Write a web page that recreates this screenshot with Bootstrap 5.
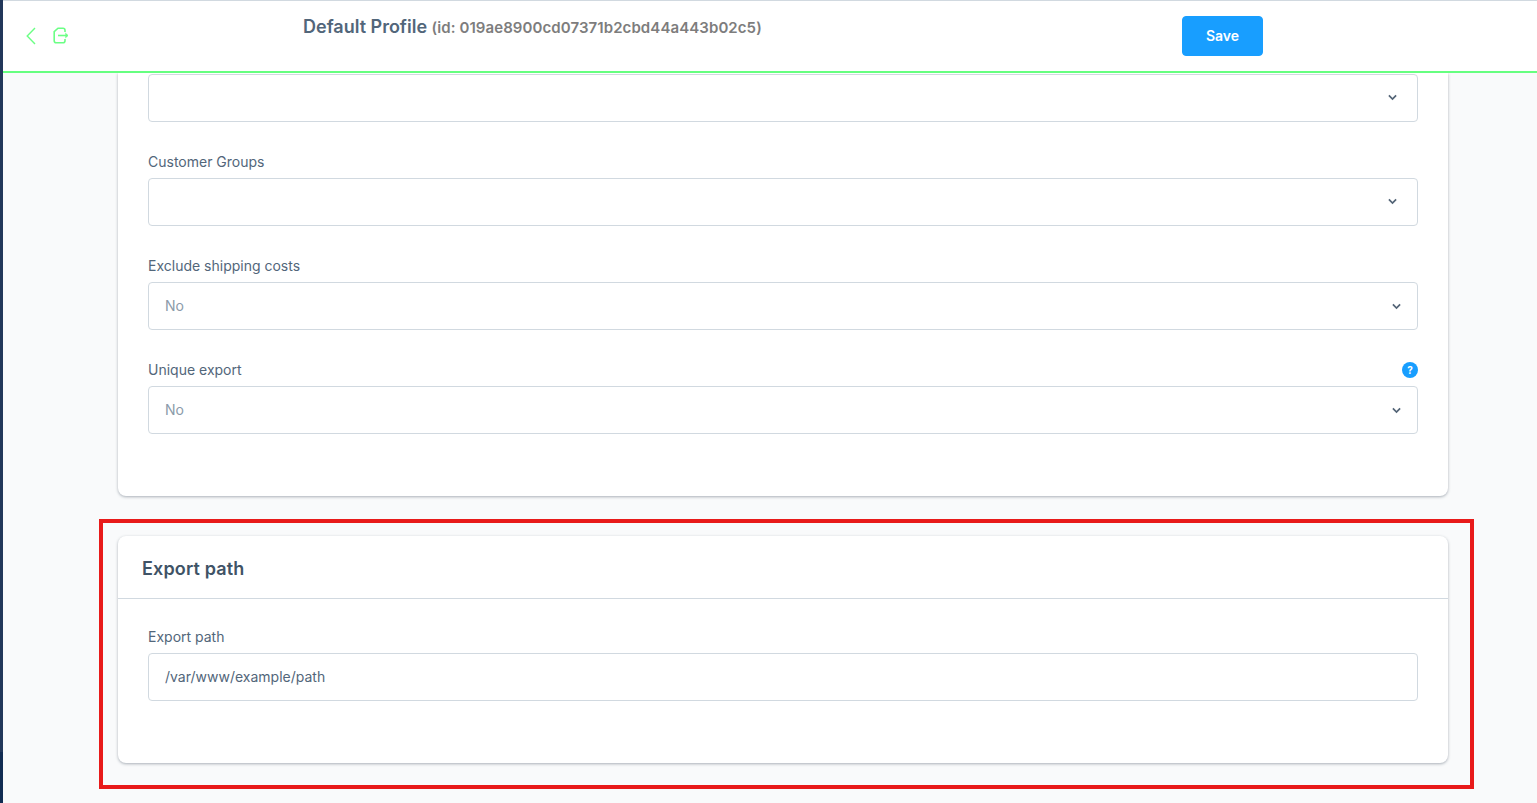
<!DOCTYPE html>
<html lang="en">
<head>
<meta charset="utf-8">
<title>Default Profile</title>
<link href="https://cdn.jsdelivr.net/npm/bootstrap@5.3.0/dist/css/bootstrap.min.css" rel="stylesheet">
<style>
html,body{height:100%;}
body{font-family:Inter,"Liberation Sans",sans-serif;font-size:14px;color:#52667a;background:#f9fafb;overflow:hidden;}
.app-shell{height:803px;overflow:hidden;}
.side-strip{width:3px;flex:none;background:linear-gradient(#22375a 0 752px,#112c52 752px);}
.work-area{min-width:0;position:relative;}
.top-bar{height:71px;flex:none;background:#fff;border-top:1px solid #d1d9e0;}
.top-rule{height:2px;flex:none;background:#66ff80;}
.top-icons{width:300px;padding-left:23px;padding-top:26px;gap:17px;}
.top-title{width:879px;padding-top:14px;font-size:18px;font-weight:600;line-height:24px;color:#52667a;white-space:nowrap;}
.top-title span{font-size:15px;letter-spacing:.085px;color:#7d7d7d;}
.save-btn{margin-top:15px;width:81px;height:40px;padding:0 0 1px;background:#189eff;border:1px solid #189eff;border-radius:4px;color:#fff;font-size:14px;font-weight:600;}
.save-btn:hover{background:#189eff;color:#fff;border-color:#189eff;}
.page-body{padding:0 89px 0 115px;}
.panel{border:0;border-radius:8px;background:#fff;box-shadow:0 1px 3px rgba(70,85,100,.45);}
.panel-first{border-radius:0 0 8px 8px;padding:1px 30px 62px;clip-path:inset(0 -6px -6px -6px);}
.panel-second{margin-top:40px;height:227px;}
.panel-head{height:63px;padding:0 24px;border-bottom:1px solid #d1d9e0;font-size:18px;font-weight:600;letter-spacing:.15px;color:#3f5366;line-height:66px;}
.panel-main{padding:30px 30px 0;}
.field-row{margin-top:32px;}
.field-row.first-row{margin-top:0;}
.field-label{height:16px;margin-bottom:8px;line-height:16px;font-size:14px;color:#52667a;}
.field-box{height:48px;border:1px solid #d1d9e0;border-radius:4px;background-color:#fff;padding:0 16px 2px;font-size:14px;color:#52667a;box-shadow:none;}
.form-select.field-box{--bs-form-select-bg-img:url("data:image/svg+xml,%3csvg xmlns='http://www.w3.org/2000/svg' viewBox='0 0 10 7'%3e%3cpath fill='none' stroke='%23536476' stroke-width='1.9' d='M1 1.2l4 4 4-4'/%3e%3c/svg%3e");background-size:9px 7px;background-position:right 20px top 19px;}
.form-select.field-box.muted-val{color:#8c9baa;padding-bottom:1px;background-position:right 16px center;}
.help-dot{width:16px;height:16px;border-radius:50%;background:#189eff;color:#fff;font-size:10px;font-weight:700;line-height:16px;text-align:center;}
.red-frame{position:absolute;left:96px;top:519px;width:1375px;height:270px;border:4px solid #e81a1a;pointer-events:none;}
</style>
</head>
<body>
<div class="app-shell d-flex">
  <div class="side-strip"></div>
  <div class="work-area flex-grow-1 d-flex flex-column">
    <header class="top-bar d-flex align-items-start">
      <div class="top-icons d-flex align-items-start">
        <svg width="10" height="18" viewBox="0 0 10 18" fill="none" stroke="#6bff85" stroke-width="1.4"><path d="M9 1L1.2 9 9 17"/></svg>
        <svg width="16" height="17" viewBox="0 0 16 17" fill="none" stroke="#6bff85" stroke-width="1.6"><path d="M12 5V3.2A2 2 0 0 0 10 1.2H5L1.2 4.6V13.8A2 2 0 0 0 3.2 15.8H10A2 2 0 0 0 12 13.8V12"/><path d="M5 8.5H14"/><path d="M12.4 6.2L15 8.5 12.4 10.8" fill="#6bff85" stroke-width="1"/></svg>
      </div>
      <div class="top-title">Default Profile <span>(id: 019ae8900cd07371b2cbd44a443b02c5)</span></div>
      <button type="button" class="btn save-btn">Save</button>
    </header>
    <div class="top-rule"></div>
    <main class="page-body">
      <section class="card panel panel-first">
        <div class="field-row first-row">
          <select class="form-select field-box" aria-label="Field"><option></option></select>
        </div>
        <div class="field-row">
          <label class="field-label d-block">Customer Groups</label>
          <select class="form-select field-box"><option></option></select>
        </div>
        <div class="field-row">
          <label class="field-label d-block">Exclude shipping costs</label>
          <select class="form-select field-box muted-val"><option>No</option></select>
        </div>
        <div class="field-row">
          <label class="field-label d-flex justify-content-between align-items-center">Unique export <span class="help-dot">?</span></label>
          <select class="form-select field-box muted-val"><option>No</option></select>
        </div>
      </section>
      <section class="card panel panel-second">
        <div class="panel-head">Export path</div>
        <div class="panel-main">
          <label class="field-label d-block">Export path</label>
          <input type="text" class="form-control field-box" value="/var/www/example/path">
        </div>
      </section>
    </main>
    <div class="red-frame"></div>
  </div>
</div>
<script src="https://cdn.jsdelivr.net/npm/bootstrap@5.3.0/dist/js/bootstrap.bundle.min.js"></script>
</body>
</html>
